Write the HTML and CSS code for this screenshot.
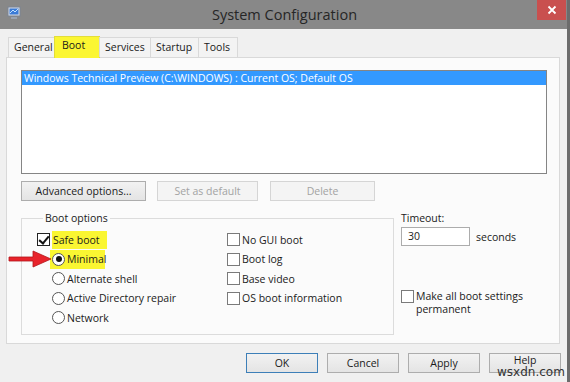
FILE: index.html
```html
<!DOCTYPE html>
<html lang="en">
<head>
	<meta charset="UTF-8">
	<title>System Configuration</title>
	<link rel="stylesheet" href="styles.css">
</head>
<body>
	<div class="window">
		<div class="titlebar">
			<svg class="appicon" width="14" height="14" viewBox="0 0 14 14">
				<rect x="1" y="1" width="12" height="9" fill="#d8dde6" stroke="#7a8494"/>
				<rect x="2.5" y="2.5" width="9" height="6" fill="#3b7bd6"/>
				<path d="M3 7 L6 4 L8 6 L11 3" stroke="#bfe0ff" fill="none"/>
				<rect x="4" y="11" width="6" height="2" fill="#9aa3b0"/>
			</svg>
			<span class="title">System Configuration</span>
			<span class="close">
				<svg width="10" height="10" viewBox="0 0 10 10"><path d="M1.5 1.5 L8.5 8.5 M8.5 1.5 L1.5 8.5" stroke="#fff" stroke-width="1.8"/></svg>
			</span>
		</div>

		<div class="tabs">
			<span class="tab t-general">General</span>
			<span class="tab t-boot active">Boot</span>
			<span class="tab t-services">Services</span>
			<span class="tab t-startup">Startup</span>
			<span class="tab t-tools">Tools</span>
		</div>

		<div class="panel">
			<div class="oslist">
				<div class="os sel">Windows Technical Preview (C:\WINDOWS) : Current OS; Default OS</div>
			</div>
			<div class="osbtns">
				<button class="btn b-adv">Advanced options...</button>
				<button class="btn b-def" disabled>Set as default</button>
				<button class="btn b-del" disabled>Delete</button>
			</div>

			<div class="lower">
				<fieldset class="group">
					<legend>Boot options</legend>
					<div class="cols">
						<div class="col left">
							<div class="opt"><span class="chk on"></span><span class="hl">Safe boot</span></div>
							<div class="opt sub"><span class="hl hlrow"><span class="radio on"></span>Minimal</span></div>
							<div class="opt sub"><span class="radio"></span>Alternate shell</div>
							<div class="opt sub"><span class="radio"></span>Active Directory repair</div>
							<div class="opt sub"><span class="radio"></span>Network</div>
						</div>
						<div class="col right">
							<div class="opt"><span class="chk"></span>No GUI boot</div>
							<div class="opt"><span class="chk"></span>Boot log</div>
							<div class="opt"><span class="chk"></span>Base video</div>
							<div class="opt"><span class="chk"></span>OS boot information</div>
						</div>
					</div>
				</fieldset>

				<div class="side">
					<div class="tlabel">Timeout:</div>
					<div class="trow"><span class="tbox">30</span><span>seconds</span></div>
					<div class="perm"><span class="chk"></span><span>Make all boot settings<br>permanent</span></div>
				</div>
			</div>
		</div>

		<div class="footer">
			<button class="btn fbtn ok">OK</button>
			<button class="btn fbtn">Cancel</button>
			<button class="btn fbtn">Apply</button>
			<button class="btn fbtn help">Help</button>
		</div>

		<svg class="arrow" width="44" height="18" viewBox="0 0 44 18">
			<path d="M1 7 L25 7 L25 1 L43 9 L25 17 L25 11 L1 11 Z" fill="#e8232b" stroke="#b3151b" stroke-width="0.8"/>
		</svg>
		<span class="mark">wsxdn.com</span>
	</div>
</body>
</html>
```

FILE: styles.css
```css
*{
	margin: 0;
	padding: 0;
	box-sizing: border-box;
}
body{
	background: #f0f0f0;
	font-family: "Open Sans", "Noto Sans", sans-serif;
	font-size: 10.5px;
	color: #1a1a1a;
	overflow: hidden;
}
.window{
	position: relative;
	width: 570px;
	height: 382px;
	border-right: 3px solid #6c6c6c;
	background: #f0f0f0;
}
.titlebar{
	height: 29px;
	background: #888888;
	display: flex;
	align-items: center;
	justify-content: center;
	position: relative;
}
.appicon{
	position: absolute;
	left: 7px;
	top: 6px;
}
.title{
	font-size: 14.5px;
	color: #262626;
	margin-left: 2px;
}
.close{
	position: absolute;
	right: 1px;
	top: 0;
	width: 29px;
	height: 20px;
	background: #c9504f;
	display: flex;
	align-items: center;
	justify-content: center;
}

/* tabs */
.tabs{
	display: flex;
	align-items: flex-end;
	padding-left: 8px;
	margin-top: 7px;
	height: 21px;
	position: relative;
	z-index: 1;
}
.tab{
	height: 20px;
	border: 1px solid #d9d9d9;
	border-bottom: none;
	background: #f3f3f3;
	padding-left: 5px;
	line-height: 18px;
	margin-right: -1px;
}
.tab.active{
	height: 22px;
	background: #fbf632;
	border-color: #e2dd3a;
	margin-bottom: -1px;
	padding-left: 7px;
	line-height: 17px;
}
.t-general{ width: 47px; }
.t-boot{ width: 46px; }
.t-services{ width: 52px; }
.t-startup{ width: 49px; }
.t-tools{ width: 40px; }

.panel{
	margin-left: 6px;
	width: 554px;
	height: 287px;
	border: 1px solid #d9d9d9;
	background: #fbfbfb;
	padding: 12px 0 0 14px;
}
.oslist{
	width: 526px;
	height: 104px;
	border: 1px solid #858585;
	background: #fff;
}
.os{
	height: 14px;
	line-height: 14px;
	padding-left: 2px;
}
.os.sel{
	background: #3399ff;
	color: #fff;
}
.osbtns{
	display: flex;
	margin-top: 7px;
}
.btn{
	height: 20px;
	font-family: inherit;
	font-size: inherit;
	color: #1a1a1a;
	border: 1px solid #adadad;
	background: linear-gradient(#f2f2f2, #e4e4e4);
}
.btn:disabled{
	color: #a3a3a3;
	border-color: #d5d5d5;
	background: #f4f4f4;
}
.b-adv{ width: 125px; }
.b-def{ width: 101px; margin-left: 11px; }
.b-del{ width: 105px; margin-left: 12px; }

.lower{
	display: flex;
	align-items: flex-start;
	margin-top: 10px;
}
.group{
	width: 373px;
	border: 1px solid #dcdcdc;
	padding: 5px 0 6px 15px;
}
.group legend{
	margin-left: 6px;
	padding: 0 2px;
	line-height: 14px;
}
.cols{
	display: flex;
}
.col.left{
	width: 190px;
}
.opt{
	height: 19.5px;
	display: flex;
	align-items: center;
}
.opt.sub{
	padding-left: 15px;
}
.chk{
	width: 13px;
	height: 13px;
	border: 1px solid #7a7a7a;
	background: #fff;
	margin-right: 2px;
	flex-shrink: 0;
	position: relative;
}
.chk.on{
	border-color: #222;
}
.chk.on::after{
	content: "";
	position: absolute;
	left: 3px;
	top: 0px;
	width: 4px;
	height: 8px;
	border: solid #111;
	border-width: 0 2px 2px 0;
	transform: rotate(40deg);
}
.radio{
	width: 13px;
	height: 13px;
	border: 1px solid #555;
	border-radius: 50%;
	background: #fff;
	margin-right: 2px;
	flex-shrink: 0;
	position: relative;
}
.radio.on::after{
	content: "";
	position: absolute;
	left: 2.5px;
	top: 2.5px;
	width: 6px;
	height: 6px;
	border-radius: 50%;
	background: #111;
}
.hl{
	background: #faf632;
	width: 55px;
	height: 18px;
	display: flex;
	align-items: center;
	padding-left: 1px;
}
.hl.hlrow{
	margin-left: -2px;
	padding-left: 2px;
	height: 19.5px;
}

.side{
	margin-left: 7px;
}
.tlabel{
	line-height: 14px;
}
.trow{
	display: flex;
	align-items: center;
	margin-top: 2px;
}
.tbox{
	width: 69px;
	height: 19px;
	border: 1px solid #acacac;
	background: #fff;
	padding-left: 6px;
	line-height: 17px;
	margin-right: 6px;
}
.perm{
	display: flex;
	align-items: flex-start;
	margin-top: 44px;
	line-height: 13px;
}
.perm .chk{
	margin-right: 2px;
}

.footer{
	display: flex;
	justify-content: flex-end;
	padding-right: 6px;
	margin-top: 9px;
	gap: 9px;
}
.fbtn{
	width: 72px;
}
.fbtn.ok{
	border-color: #3d7fb8;
}
.fbtn.help{
	line-height: 12px;
	padding-bottom: 6px;
}

.arrow{
	position: absolute;
	left: 8px;
	top: 250px;
}
.mark{
	position: absolute;
	left: 497px;
	top: 365px;
	font-family: "DejaVu Sans", sans-serif;
	font-size: 12px;
	color: #333;
}
```
